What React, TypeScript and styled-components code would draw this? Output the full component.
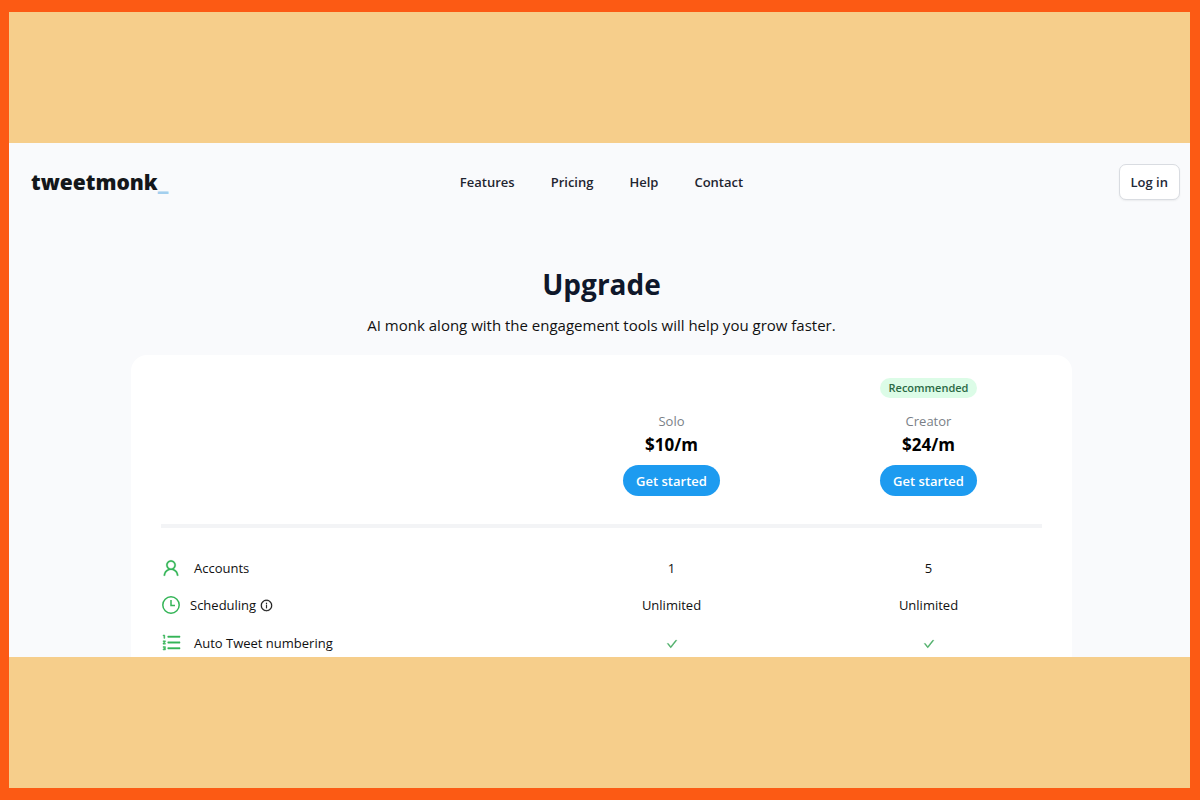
import React from "react";
import styled, { createGlobalStyle } from "styled-components";
import {
  AiOutlineCheck,
  AiOutlineInfoCircle,
  AiOutlineOrderedList,
  AiOutlineUser,
} from "react-icons/ai";

const GlobalStyle = createGlobalStyle`
  *, *::before, *::after { box-sizing: border-box; }
  body {
    margin: 0;
    color: #111111;
    font-family: "Segoe UI", "Open Sans", "Noto Sans", sans-serif;
    font-size: 13px;
    line-height: 20px;
  }
  button { font-family: inherit; cursor: pointer; }
`;

const Frame = styled.div`
  display: flex;
  flex-direction: column;
  min-height: 100vh;
  border: solid #fc5a14;
  border-width: 12px 10px 12px 9px;
  background: #f6ce8b;
`;

const Band = styled.div`
  flex: 1;
`;

const Page = styled.div`
  background: #f9fafc;
`;

const Header = styled.header`
  display: grid;
  grid-template-columns: 1fr auto 1fr;
  align-items: center;
  padding: 21px 10px 0 14px;
`;

const Logo = styled.a`
  justify-self: start;
  padding-left: 8px;
  color: #14171a;
  font-size: 21px;
  font-weight: 800;
  line-height: 36px;
  text-decoration: none;
`;

const Cursor = styled.span`
  color: #a3cfee;
`;

const Nav = styled.nav`
  display: flex;
  gap: 36px;
`;

const NavLink = styled.a`
  color: #1f2530;
  font-weight: 600;
  text-decoration: none;
`;

const LoginButton = styled.button`
  justify-self: end;
  height: 36px;
  padding: 0 11px;
  border: 1px solid #d9dce1;
  border-radius: 7px;
  background: #ffffff;
  box-shadow: 0 1px 2px rgba(0, 0, 0, 0.06);
  color: #1f2937;
  font-size: 13px;
  font-weight: 600;
`;

const Main = styled.main`
  padding: 64px 118px 0 122px;
  text-align: center;
`;

const Title = styled.h1`
  margin: 0;
  color: #0f172a;
  font-size: 28px;
  font-weight: 700;
  line-height: 40px;
`;

const Subtitle = styled.p`
  margin: 9px 0 18px;
  font-size: 15px;
  line-height: 24px;
`;

const Card = styled.section`
  padding: 23px 15px 0;
  border-radius: 16px 16px 0 0;
  background: #ffffff;
`;

const Table = styled.table`
  width: 100%;
  table-layout: fixed;
  border-collapse: collapse;
`;

const PlanColumn = styled.col`
  width: 257px;
`;

const PlanCell = styled.th`
  padding: 0;
  font-weight: 400;
  vertical-align: bottom;
`;

const Badge = styled.div`
  width: max-content;
  margin: 0 auto 13px;
  padding: 0 9px;
  border-radius: 10px;
  background: #dcfce7;
  color: #2b6a45;
  font-size: 11px;
  font-weight: 600;
`;

const PlanName = styled.div`
  color: #7a7f87;
`;

const Price = styled.div`
  margin: 2px 0 8px;
  color: #000000;
  font-size: 17px;
  font-weight: 700;
  line-height: 24px;
`;

const StartButton = styled.button`
  height: 31px;
  padding: 0 13px;
  border: 0;
  border-radius: 16px;
  background: #1d9bf0;
  color: #ffffff;
  font-size: 13px;
  font-weight: 600;
`;

const DividerCell = styled.td`
  padding: 28px 15px 22px;
`;

const Divider = styled.hr`
  height: 4px;
  margin: 0;
  border: 0;
  background: #f3f4f6;
`;

const FeatureRow = styled.tr`
  height: 37px;
  &:last-child { height: 33px; }
  > * { padding: 8px 0 0; vertical-align: top; }
`;

const FeatureCell = styled.th`
  font-weight: 400;
  text-align: left;
`;

const Feature = styled.div<{ $gap: number }>`
  display: flex;
  align-items: center;
  gap: ${(p) => p.$gap}px;
  padding-left: 15px;
  > svg { color: #35b558; }
`;

const FeatureName = styled.span`
  display: flex;
  align-items: center;
  gap: 4px;
`;

const Value = styled.td`
  text-align: center;
`;

const Check = styled(AiOutlineCheck)`
  color: #4cae67;
  vertical-align: middle;
`;

const UserIcon = () => <AiOutlineUser size={20} strokeWidth={12} />;

const ListIcon = () => <AiOutlineOrderedList size={21} strokeWidth={20} />;

const ClockIcon = () => (
  <svg width="20" height="20" viewBox="0 0 20 20" fill="none" stroke="currentColor" strokeWidth="1.5">
    <circle cx="10" cy="10" r="8.2" />
    <path d="M10 5v5.6h4" />
  </svg>
);

const plans = [
  { name: "Solo", price: "$10/m", recommended: false },
  { name: "Creator", price: "$24/m", recommended: true },
];

const check = <Check size={12} strokeWidth={40} role="img" aria-label="Included" />;

const features = [
  { name: "Accounts", Icon: UserIcon, gap: 13, values: ["1", "5"] },
  { name: "Scheduling", Icon: ClockIcon, gap: 9, info: true, values: ["Unlimited", "Unlimited"] },
  { name: "Auto Tweet numbering", Icon: ListIcon, gap: 12, values: [check, check] },
];

export default function App() {
  return (
    <>
      <GlobalStyle />
      <Frame>
        <Band />
        <Page>
          <Header>
            <Logo href="#">tweetmonk<Cursor>_</Cursor></Logo>
            <Nav>
              {["Features", "Pricing", "Help", "Contact"].map((item) => (
                <NavLink key={item} href={`#${item.toLowerCase()}`}>{item}</NavLink>
              ))}
            </Nav>
            <LoginButton type="button">Log in</LoginButton>
          </Header>
          <Main>
            <Title>Upgrade</Title>
            <Subtitle>AI monk along with the engagement tools will help you grow faster.</Subtitle>
            <Card>
              <Table>
                <colgroup>
                  <col />
                  <PlanColumn />
                  <PlanColumn />
                </colgroup>
                <thead>
                  <tr>
                    <td />
                    {plans.map((plan) => (
                      <PlanCell key={plan.name} scope="col">
                        {plan.recommended && <Badge>Recommended</Badge>}
                        <PlanName>{plan.name}</PlanName>
                        <Price>{plan.price}</Price>
                        <StartButton type="button">Get started</StartButton>
                      </PlanCell>
                    ))}
                  </tr>
                </thead>
                <tbody>
                  <tr>
                    <DividerCell colSpan={3}><Divider /></DividerCell>
                  </tr>
                  {features.map(({ name, Icon, gap, info, values }) => (
                    <FeatureRow key={name}>
                      <FeatureCell scope="row">
                        <Feature $gap={gap}>
                          <Icon />
                          <FeatureName>
                            {name}
                            {info && <AiOutlineInfoCircle size={13} strokeWidth={16} />}
                          </FeatureName>
                        </Feature>
                      </FeatureCell>
                      {values.map((value, i) => (
                        <Value key={i}>{value}</Value>
                      ))}
                    </FeatureRow>
                  ))}
                </tbody>
              </Table>
            </Card>
          </Main>
        </Page>
        <Band />
      </Frame>
    </>
  );
}
